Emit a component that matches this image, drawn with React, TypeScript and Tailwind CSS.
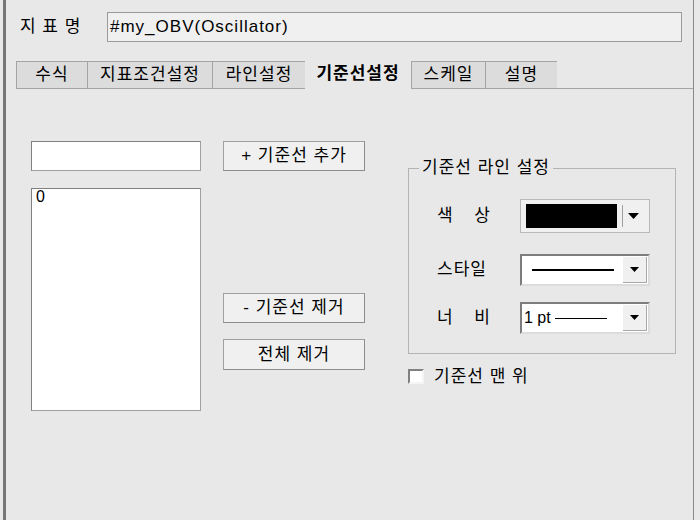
import React from 'react'

const font = { fontFamily: '"Liberation Sans", "Noto Sans CJK KR", sans-serif' }

const tabs = [
  { label: '수식', w: 'w-[71px]' },
  { label: '지표조건설정', w: 'w-[125px]' },
  { label: '라인설정', w: 'w-[93px]' },
  { label: '기준선설정', w: 'w-[106px]', active: true },
  { label: '스케일', w: 'w-[74px]' },
  { label: '설명', w: 'w-[72px]' },
]

function Arrow() {
  return (
    <svg width="9" height="5" viewBox="0 0 9 5">
      <polygon points="0,0 9,0 4.5,5" fill="#000" />
    </svg>
  )
}

function Button({ children, className = '' }: { children: React.ReactNode; className?: string }) {
  return (
    <div
      className={`w-[142px] h-[30px] flex items-center justify-center bg-[#f0f0f0] border border-[#a0a0a0] border-r-[#8c8c8c] border-b-[#8c8c8c] text-[17px] tracking-[1px] text-black ${className}`}
    >
      {children}
    </div>
  )
}

function SunkenCombo({ children }: { children: React.ReactNode }) {
  return (
    <div className="w-[130px] h-[32px] flex bg-white border-2 border-t-[#7c7c7c] border-l-[#7c7c7c] border-r-[#dcdcdc] border-b-[#dcdcdc]">
      <div className="flex-1 flex items-center">{children}</div>
      <div className="w-[24px] flex items-center justify-center bg-[#f0f0f0] border-r border-b border-[#a8a8a8] my-[1px] mr-[1px]">
        <Arrow />
      </div>
    </div>
  )
}

export default function App() {
  return (
    <div className="w-[700px] h-[520px] bg-[#e8e8e8] flex text-black" style={font}>
      <div className="w-[3px]" />
      <div className="w-[691px] h-full border-l-[3px] border-r border-l-[#767676] border-r-[#8a8a8a] flex flex-col">
        {/* 지표명 */}
        <div className="flex items-center mt-[12px] h-[30px]">
          <div className="ml-[14px] w-[87px] text-[17px] tracking-[1px]">지 표 명</div>
          <div className="w-[575px] h-[30px] bg-[#f0f0f0] border border-[#9a9a9a] flex items-center pl-[2px] text-[17px] tracking-[1px]">
            #my_OBV(Oscillator)
          </div>
        </div>

        {/* 탭 */}
        <div className="flex items-end mt-[17px] h-[30px]">
          <div className="w-[10px]" />
          {tabs.map((t) =>
            t.active ? (
              <div
                key={t.label}
                className={`${t.w} h-[30px] flex items-center justify-center text-[17px] font-bold tracking-[1px] bg-[#e8e8e8]`}
              >
                {t.label}
              </div>
            ) : (
              <div
                key={t.label}
                className={`${t.w} h-[28px] flex items-center justify-center text-[17px] tracking-[1px] bg-[#dcdcdc] border border-r-0 last:border-r border-[#a4a4a4]`}
              >
                {t.label}
              </div>
            )
          )}
          <div className="flex-1 h-[28px] border-b border-[#a4a4a4]" />
        </div>

        {/* 내용 */}
        <div className="flex">
          <div className="ml-[25px] mt-[52px] flex flex-col">
            <div className="w-[170px] h-[30px] bg-white border border-[#808080] border-r-[#a0a0a0] border-b-[#a0a0a0]" />
            <div className="mt-[17px] w-[170px] h-[223px] bg-white border border-[#808080] border-r-[#a0a0a0] border-b-[#a0a0a0] px-[4px] text-[16px] leading-[15px]">
              0
            </div>
          </div>

          <div className="ml-[22px] mt-[52px] flex flex-col">
            <Button>+ 기준선 추가</Button>
            <Button className="mt-[122px]">- 기준선 제거</Button>
            <Button className="mt-[16px] h-[31px]">전체 제거</Button>
          </div>

          <div className="ml-[43px] mt-[70px] flex flex-col">
            <fieldset className="w-[268px] h-[195px] border border-[#b4b4b4]">
              <legend className="ml-[10px] px-[3px] text-[17px] tracking-[1px] leading-[18px]">
                기준선 라인 설정
              </legend>
              <div className="ml-[28px] mt-[22px] flex flex-col">
                <div className="flex items-center h-[34px]">
                  <div className="w-[53px] flex justify-between text-[17px]">
                    <span>색</span>
                    <span>상</span>
                  </div>
                  <div className="ml-[30px] w-[130px] h-[34px] flex items-center bg-[#f0f0f0] border border-[#b8b8b8] px-[5px]">
                    <div className="w-[91px] h-[24px] bg-black" />
                    <div className="ml-[5px] w-px h-[22px] bg-[#a0a0a0]" />
                    <div className="flex-1 flex justify-center">
                      <svg width="11" height="6" viewBox="0 0 11 6">
                        <polygon points="0,0 11,0 5.5,6" fill="#000" />
                      </svg>
                    </div>
                  </div>
                </div>

                <div className="flex items-center h-[33px] mt-[20px]">
                  <div className="w-[53px] text-[17px] tracking-[1px]">스타일</div>
                  <div className="ml-[30px]">
                    <SunkenCombo>
                      <div className="ml-[10px] w-[82px] h-[2px] bg-black" />
                    </SunkenCombo>
                  </div>
                </div>

                <div className="flex items-center h-[32px] mt-[16px]">
                  <div className="w-[53px] flex justify-between text-[17px]">
                    <span>너</span>
                    <span>비</span>
                  </div>
                  <div className="ml-[30px]">
                    <SunkenCombo>
                      <span className="ml-[2px] text-[16px]">1 pt</span>
                      <div className="ml-[4px] w-[52px] h-px bg-black" />
                    </SunkenCombo>
                  </div>
                </div>
              </div>
            </fieldset>

            <div className="flex items-center mt-[10px]">
              <div className="w-[16px] h-[15px] bg-white border-2 border-t-[#808080] border-l-[#808080] border-r-[#f4f4f4] border-b-[#f4f4f4]" />
              <span className="ml-[10px] text-[17px] tracking-[1px]">기준선 맨 위</span>
            </div>
          </div>
        </div>
      </div>
    </div>
  )
}
